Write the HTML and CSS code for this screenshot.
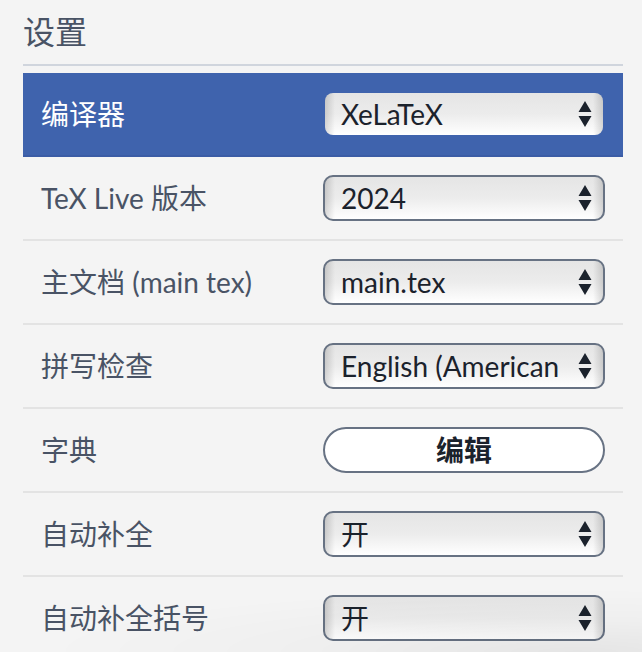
FILE: index.html
```html
<!DOCTYPE html>
<html lang="zh-CN">
<head>
<meta charset="utf-8">
<meta name="viewport" content="width=device-width, initial-scale=1">
<title>设置</title>
<link rel="stylesheet" href="styles.css">
</head>
<body>
<svg class="defs" aria-hidden="true">
  <symbol id="arrows" viewBox="0 0 14 26">
    <path d="M7 0L13.5 11H0.500Z M0.500 15H13.500L7 26Z" fill="#1b222c"/>
  </symbol>
</svg>
<main class="settings">
  <h1 class="title">设置</h1>
  <form class="rows">
    <div class="row row-active">
      <label class="label" for="compiler">编译器</label>
      <div class="field">
        <select class="control select" id="compiler"><option>XeLaTeX</option></select>
        <svg class="arrows" aria-hidden="true"><use href="#arrows"/></svg>
      </div>
    </div>
    <div class="row">
      <label class="label" for="version">TeX Live 版本</label>
      <div class="field">
        <select class="control select" id="version"><option>2024</option></select>
        <svg class="arrows" aria-hidden="true"><use href="#arrows"/></svg>
      </div>
    </div>
    <div class="row">
      <label class="label" for="maindoc">主文档 (main tex)</label>
      <div class="field">
        <select class="control select" id="maindoc"><option>main.tex</option></select>
        <svg class="arrows" aria-hidden="true"><use href="#arrows"/></svg>
      </div>
    </div>
    <div class="row">
      <label class="label" for="spell">拼写检查</label>
      <div class="field">
        <select class="control select" id="spell"><option>English (American)</option></select>
        <svg class="arrows" aria-hidden="true"><use href="#arrows"/></svg>
      </div>
    </div>
    <div class="row">
      <label class="label" for="dictionary">字典</label>
      <div class="field">
        <button class="control button" id="dictionary" type="button">编辑</button>
      </div>
    </div>
    <div class="row">
      <label class="label" for="complete">自动补全</label>
      <div class="field">
        <select class="control select" id="complete"><option>开</option></select>
        <svg class="arrows" aria-hidden="true"><use href="#arrows"/></svg>
      </div>
    </div>
    <div class="row">
      <label class="label" for="brackets">自动补全括号</label>
      <div class="field">
        <select class="control select" id="brackets"><option>开</option></select>
        <svg class="arrows" aria-hidden="true"><use href="#arrows"/></svg>
      </div>
    </div>
  </form>
</main>
</body>
</html>
```
FILE: styles.css
```css
* {
  box-sizing: border-box;
}

html {
  overflow: hidden;
}

body {
  margin: 0;
  background: #f4f4f4;
  color: #495365;
  font-family: Lato, "Noto Sans CJK SC", sans-serif;
  font-size: 28px;
  line-height: 42px;
}

/* Soft shade rising from the bottom edge of the window */
body::after {
  content: "";
  position: fixed;
  right: 0;
  bottom: 0;
  left: 0;
  height: 64px;
  background: radial-gradient(ellipse 84% 100% at 90% 100%, rgba(0, 0, 0, 0.06), rgba(0, 0, 0, 0.02) 50%, transparent);
  pointer-events: none;
}

.defs {
  display: none;
}

.settings {
  padding: 8px 19px 0 23px;
}

.title {
  margin: 0 0 7px;
  padding-bottom: 8px;
  border-bottom: 2px solid #d0d5dd;
  font-size: 32px;
  font-weight: 400;
  line-height: 48px;
}

.row {
  display: flex;
  align-items: center;
  justify-content: space-between;
  padding: 18px;
  border-bottom: 2px solid #e3e3e3;
}

.row-active {
  background: #3f63ad;
  border-color: #3b5ca5;
  color: #fff;
}

.label {
  white-space: nowrap;
}

.field {
  position: relative;
  width: 50%;
}

.control {
  display: block;
  width: 100%;
  height: 46px;
  margin: 0;
  border: 2px solid #677283;
  color: #1b222c;
  font: inherit;
}

.select {
  appearance: none;
  padding: 0 44px 0 16px;
  border-radius: 10px;
  background:
    linear-gradient(90deg, rgba(0, 0, 0, 0.14), transparent 10px, transparent calc(100% - 10px), rgba(0, 0, 0, 0.14)),
    linear-gradient(#e5e5e5, #ececec 50%, #fff);
}

.row-active .select {
  border-color: transparent;
  background-clip: padding-box;
}

.button {
  padding: 0;
  border-radius: 23px;
  background: #fff;
  font-weight: 700;
}

.arrows {
  position: absolute;
  top: 10px;
  right: 13px;
  width: 14px;
  height: 26px;
}
```
